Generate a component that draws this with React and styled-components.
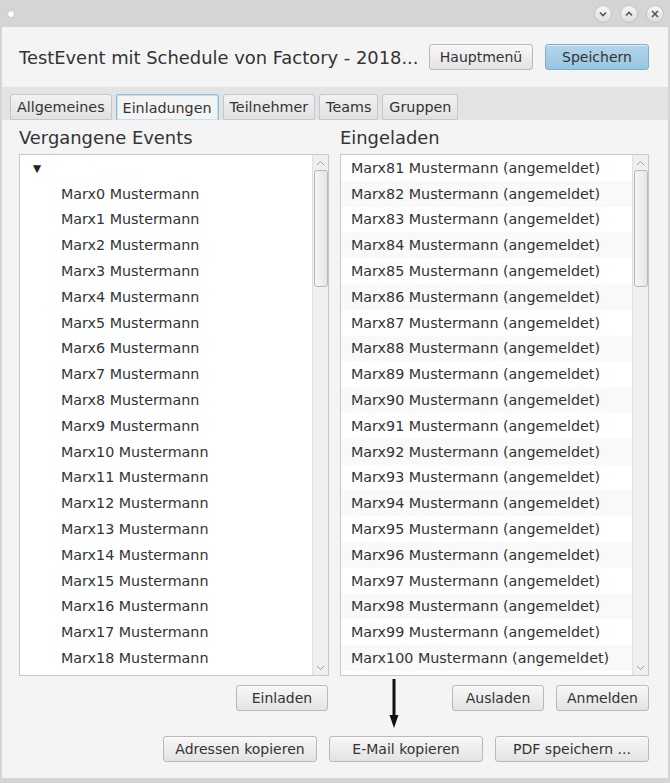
import React from "react";
import styled, { createGlobalStyle } from "styled-components";

const GlobalStyle = createGlobalStyle`
  html, body {
    margin: 0;
    padding: 0;
    background: #d5d5d5;
  }
  body {
    font-family: "DejaVu Sans", "Liberation Sans", sans-serif;
    color: #333333;
  }
`;

const Window = styled.div`
  position: relative;
  width: 670px;
  height: 783px;
  background: #d5d5d5;
  display: flex;
  flex-direction: column;
`;

const TitleBar = styled.div`
  height: 27px;
  display: flex;
  align-items: center;
  padding: 0 6px 0 7px;
  box-sizing: border-box;
`;

const MenuDot = styled.span`
  width: 6px;
  height: 6px;
  border-radius: 50%;
  background: #ffffff;
  border: 1px solid #c8c8c8;
`;

const TitleButtons = styled.div`
  margin-left: auto;
  display: flex;
  gap: 8px;
`;

const CircleButton = styled.span`
  width: 18px;
  height: 18px;
  border-radius: 50%;
  box-sizing: border-box;
  border: 1px solid #c2c2c2;
  background: linear-gradient(#f6f6f6, #dedede);
  display: flex;
  align-items: center;
  justify-content: center;
`;

const Frame = styled.div`
  flex: 1;
  margin: 0 2px 5px 2px;
  background: #f4f4f4;
  display: flex;
  flex-direction: column;
`;

const Header = styled.div`
  height: 60px;
  display: flex;
  align-items: center;
  padding: 0 19px 0 17px;
  gap: 10px;
`;

const Title = styled.h1`
  margin: 0;
  flex: 1;
  font-size: 17.9px;
  font-weight: normal;
  white-space: nowrap;
  overflow: hidden;
  color: #333333;
`;

const Button = styled.button`
  height: 26px;
  width: ${(p) => p.$w || 92}px;
  padding: 0;
  font-family: inherit;
  font-size: 14px;
  color: #333333;
  border-radius: 3px;
  border: 1px solid ${(p) => (p.$primary ? "#80adc9" : "#b9b9b9")};
  background: ${(p) =>
    p.$primary
      ? "linear-gradient(#b2d6ec, #98c6e2)"
      : "linear-gradient(#f7f7f7, #e3e3e3)"};
  box-shadow: inset 0 1px 0 rgba(255, 255, 255, 0.6);
`;

const HeaderButtons = styled.div`
  display: flex;
  gap: 12px;
`;

const TabBar = styled.div`
  height: 33px;
  background: #e3e3e3;
  display: flex;
  align-items: flex-end;
  padding-left: 8px;
  gap: 4px;
`;

const Tab = styled.div`
  height: 26px;
  box-sizing: border-box;
  padding: 0 6px;
  display: flex;
  align-items: center;
  font-size: 14.3px;
  border-radius: 3px 3px 0 0;
  border: 1px solid ${(p) => (p.$active ? "#86c2de" : "#c6c6c6")};
  border-bottom: ${(p) => (p.$active ? "none" : "1px solid #c6c6c6")};
  background: ${(p) =>
    p.$active ? "#f4f4f4" : "linear-gradient(#f2f2f2, #e1e1e1)"};
  box-shadow: ${(p) => (p.$active ? "inset 0 0 0 1px #c4e2f0" : "none")};
`;

const Content = styled.div`
  flex: 1;
  display: grid;
  grid-template-columns: 310px 309px;
  column-gap: 11px;
  padding: 0 19px 0 17px;
`;

const Column = styled.div`
  display: flex;
  flex-direction: column;
`;

const SectionLabel = styled.div`
  height: 34px;
  display: flex;
  align-items: center;
  font-size: 17.9px;
`;

const ListBox = styled.div`
  position: relative;
  height: 522px;
  box-sizing: border-box;
  border: 1px solid #c9c9c9;
  background: #ffffff;
  display: flex;
  overflow: hidden;
`;

const Rows = styled.div`
  flex: 1;
  display: flex;
  flex-direction: column;
`;

const Row = styled.div`
  height: 25.8px;
  flex-shrink: 0;
  display: flex;
  align-items: center;
  padding-left: ${(p) => p.$indent || 10}px;
  font-size: 14.3px;
  white-space: nowrap;
  background: ${(p) => (p.$alt ? "#f9f9f9" : "#ffffff")};
`;

const Disclosure = styled.span`
  font-size: 10.5px;
  color: #222;
`;

const ScrollBar = styled.div`
  width: 16px;
  flex-shrink: 0;
  background: #efefef;
  border-left: 1px solid #e0e0e0;
  display: flex;
  flex-direction: column;
  align-items: center;
  box-sizing: border-box;
`;

const ScrollArrow = styled.div`
  height: 15px;
  display: flex;
  align-items: center;
  justify-content: center;
`;

const Thumb = styled.div`
  width: 14px;
  height: 117px;
  box-sizing: border-box;
  border: 1px solid #b9b9b9;
  border-radius: 3px;
  background: linear-gradient(90deg, #f6f6f6, #e6e6e6);
`;

const Spacer = styled.div`
  flex: 1;
`;

const ButtonRow = styled.div`
  display: flex;
  justify-content: flex-end;
  gap: 12px;
  margin-top: ${(p) => p.$top || 9}px;
  padding-right: ${(p) => p.$right || 0}px;
`;

const Footer = styled.div`
  padding: 0 19px 16px 0;
`;

const Annotation = styled.svg`
  position: absolute;
  left: 388px;
  top: 679px;
`;

const Chevron = ({ up }) => (
  <svg width="8" height="8" viewBox="0 0 8 8">
    <path
      d={up ? "M1 5.5 L4 2.5 L7 5.5" : "M1 2.5 L4 5.5 L7 2.5"}
      fill="none"
      stroke="#555"
      strokeWidth="1.6"
    />
  </svg>
);

const Cross = () => (
  <svg width="8" height="8" viewBox="0 0 8 8">
    <path d="M1 1 L7 7 M7 1 L1 7" stroke="#555" strokeWidth="1.6" />
  </svg>
);

const SmallArrow = ({ up }) => (
  <svg width="9" height="6" viewBox="0 0 9 6">
    <path
      d={up ? "M1 5 L4.5 1.5 L8 5" : "M1 1 L4.5 4.5 L8 1"}
      fill="none"
      stroke="#9a9a9a"
      strokeWidth="1"
    />
  </svg>
);

const VScroll = () => (
  <ScrollBar>
    <ScrollArrow>
      <SmallArrow up />
    </ScrollArrow>
    <Thumb />
    <Spacer />
    <ScrollArrow>
      <SmallArrow />
    </ScrollArrow>
  </ScrollBar>
);

const past = Array.from({ length: 19 }, (_, i) => `Marx${i} Mustermann`);
const invited = Array.from(
  { length: 20 },
  (_, i) => `Marx${81 + i} Mustermann (angemeldet)`
);

const App = () => (
  <Window>
    <GlobalStyle />
    <TitleBar>
      <MenuDot />
      <TitleButtons>
        <CircleButton>
          <Chevron />
        </CircleButton>
        <CircleButton>
          <Chevron up />
        </CircleButton>
        <CircleButton>
          <Cross />
        </CircleButton>
      </TitleButtons>
    </TitleBar>
    <Frame>
      <Header>
        <Title>TestEvent mit Schedule von Factory - 2018...</Title>
        <HeaderButtons>
          <Button $w={104}>Hauptmenü</Button>
          <Button $w={104} $primary>
            Speichern
          </Button>
        </HeaderButtons>
      </Header>
      <TabBar>
        <Tab>Allgemeines</Tab>
        <Tab $active>Einladungen</Tab>
        <Tab>Teilnehmer</Tab>
        <Tab>Teams</Tab>
        <Tab>Gruppen</Tab>
      </TabBar>
      <Content>
        <Column>
          <SectionLabel>Vergangene Events</SectionLabel>
          <ListBox>
            <Rows>
              <Row $indent={13}>
                <Disclosure>▼</Disclosure>
              </Row>
              {past.map((name) => (
                <Row key={name} $indent={41}>
                  {name}
                </Row>
              ))}
            </Rows>
            <VScroll />
          </ListBox>
          <ButtonRow $right={1}>
            <Button $w={92}>Einladen</Button>
          </ButtonRow>
        </Column>
        <Column>
          <SectionLabel>Eingeladen</SectionLabel>
          <ListBox>
            <Rows>
              {invited.map((name, i) => (
                <Row key={name} $alt={i % 2 === 1}>
                  {name}
                </Row>
              ))}
            </Rows>
            <VScroll />
          </ListBox>
          <ButtonRow>
            <Button $w={92}>Ausladen</Button>
            <Button $w={93}>Anmelden</Button>
          </ButtonRow>
        </Column>
      </Content>
      <Footer>
        <ButtonRow $top={25}>
          <Button $w={154}>Adressen kopieren</Button>
          <Button $w={154}>E-Mail kopieren</Button>
          <Button $w={154}>PDF speichern ...</Button>
        </ButtonRow>
      </Footer>
    </Frame>
    <Annotation width="12" height="50" viewBox="0 0 12 50">
      <path d="M6 0 L6 38" stroke="#111" strokeWidth="3" />
      <path d="M1.5 36 L10.5 36 L6 49 Z" fill="#111" />
    </Annotation>
  </Window>
);

export default App;
